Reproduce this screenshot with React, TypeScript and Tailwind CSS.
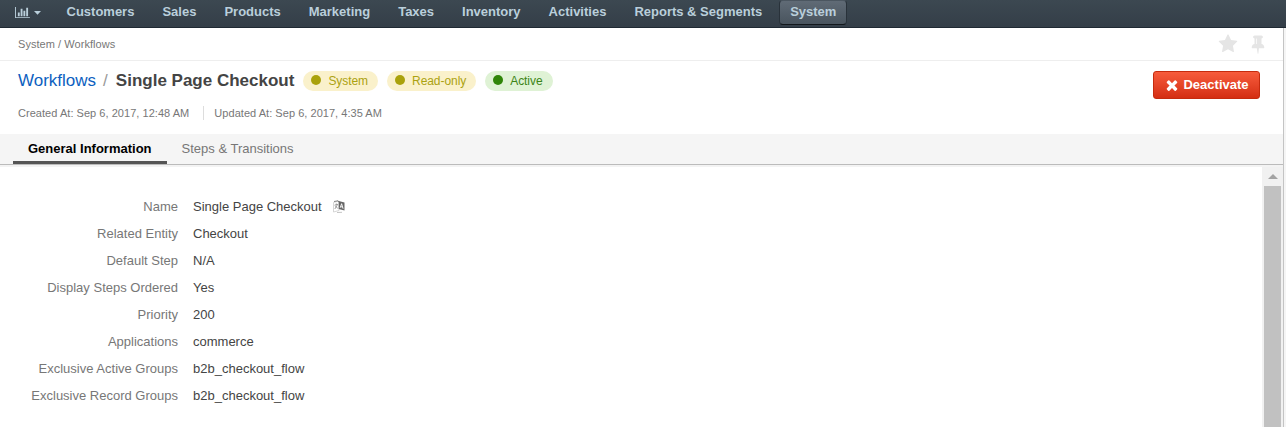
import React from "react";

const NAV = ["Customers", "Sales", "Products", "Marketing", "Taxes", "Inventory", "Activities", "Reports & Segments"];

const FIELDS: [string, string][] = [
  ["Name", "Single Page Checkout"],
  ["Related Entity", "Checkout"],
  ["Default Step", "N/A"],
  ["Display Steps Ordered", "Yes"],
  ["Priority", "200"],
  ["Applications", "commerce"],
  ["Exclusive Active Groups", "b2b_checkout_flow"],
  ["Exclusive Record Groups", "b2b_checkout_flow"],
];

function Badge({ label, tone }: { label: string; tone: "warn" | "ok" }) {
  const color = tone === "ok" ? "bg-[#dff2d5] text-[#3c8517]" : "bg-[#faf1cb] text-[#aca211]";
  const dot = tone === "ok" ? "bg-[#2f8508]" : "bg-[#aaa20b]";
  return (
    <span className={`flex h-5 items-center rounded-full pl-2 pr-[10px] text-[12px] leading-5 tracking-[-0.06px] ${color}`}>
      <span className={`mr-[7px] mb-[2px] size-[10px] rounded-full ${dot}`} />
      {label}
    </span>
  );
}

function TranslateIcon() {
  return (
    <svg className="ml-[11px] h-[13px] w-3" viewBox="0 0 12 13" fill="none">
      <path d="M.5 2.500 6 1v9.500L.5 12z" fill="#fff" stroke="#ccc" strokeWidth=".8" />
      <path d="M1.500 5.200 5 4.300M3.300 3.500v1.300M4.500 4.600 1.800 9M2.200 6 4.800 8.300" stroke="#888" strokeWidth=".8" />
      <path d="M1 1.500 5 .8 6 2.200" stroke="#777" strokeWidth=".9" />
      <path d="M5.700 1 11.500 2.500V10.500L5.700 9z" fill="#666" />
      <path d="M7.200 7.800 8.600 3.700l1.500 5M7.600 6.600l2 .5" stroke="#fff" strokeWidth=".9" />
      <path d="m4 12.500 5-.2" stroke="#aaa" strokeWidth=".7" />
    </svg>
  );
}

export default function App() {
  return (
    <div className="flex h-[427px] flex-col overflow-hidden bg-white font-['Liberation_Sans',Arial,sans-serif] text-[13px] text-[#444]">
      <nav className="flex h-7 shrink-0 items-start border-b border-[#1f2933] bg-linear-to-b from-[#3c4851] to-[#343e48] font-bold text-[#bacfdb]">
        <div className="flex h-6 w-[55.5px] items-center pl-[15px]">
          <svg className="h-[13px] w-[15px]" viewBox="0 0 2048 1792" fill="currentColor">
            <path d="M640 896v512H384V896h256zm384-512v1024H768V384h256zm1024 1152v128H0V128h128v1408h1920zm-640-896v768h-256V640h256zm384-384v1152h-256V256h256z" />
          </svg>
          <svg className="ml-1 mt-px h-1 w-[7px]" viewBox="0 0 7 4" fill="currentColor">
            <path d="M0 0h7L3.500 3.700z" />
          </svg>
        </div>
        {NAV.map((n) => (
          <a key={n} className="mr-[6px] px-[11px] leading-6">{n}</a>
        ))}
        <a className="h-[25px] w-[68px] rounded-[4px] border border-[#29323a] border-t-[#4b5660] border-b-[#12171b] bg-linear-to-b from-[#606b76] to-[#49545e] text-center leading-[22px]">System</a>
      </nav>

      <div className="flex min-h-0 flex-1">
        <main className="flex w-[1283px] shrink-0 flex-col">
          <div className="flex h-[33px] shrink-0 items-center justify-between border-b border-[#eee] pl-[18px] pr-[18px] text-[11px] text-[#777]">
            <span className="tracking-[0.05px]">System / Workflows</span>
            <span className="flex items-center gap-[13px] text-[#e5e5e5]">
              <svg className="size-5" viewBox="0 0 1792 1792" fill="currentColor">
                <path d="M1728 647q0 22-26 48l-363 354 86 500q1 7 1 20 0 21-10.500 35.500t-30.500 14.500q-19 0-40-12l-449-236-449 236q-22 12-40 12-21 0-31.500-14.500t-10.500-35.500q0-6 2-20l86-500-364-354q-25-27-25-48 0-37 56-46l502-73 225-455q19-41 49-41t49 41l225 455 502 73q56 9 56 46z" />
              </svg>
              <svg className="h-5 w-[14px]" viewBox="256 0 1280 1792" fill="currentColor">
                <path d="M800 864v-448q0-14-9-23t-23-9-23 9-9 23v448q0 14 9 23t23 9 23-9 9-23zm672 352q0 26-19 45t-45 19h-429l-51 483q-2 12-10.500 20.500t-20.500 8.500h-1q-27 0-32-27l-76-485h-404q-26 0-45-19t-19-45q0-123 78.500-221.500t177.500-98.500v-512q-52 0-90-38t-38-90 38-90 90-38h640q52 0 90 38t38 90-38 90-90 38v512q99 0 177.500 98.500t78.500 221.500z" />
              </svg>
            </span>
          </div>

          <header className="flex h-[73px] shrink-0 items-start justify-between pl-[18px] pr-[23px] pt-[10px]">
            <div>
              <div className="flex h-5 items-center">
                <h1 className="flex text-[17px] leading-5">
                  <a className="text-[#0d5fc0]">Workflows</a>
                  <span className="ml-[7px] mr-2 text-[#999]">/</span>
                  <span className="font-bold">Single Page Checkout</span>
                </h1>
                <div className="ml-[9px] flex gap-[9px]">
                  <Badge label="System" tone="warn" />
                  <Badge label="Read-only" tone="warn" />
                  <Badge label="Active" tone="ok" />
                </div>
              </div>
              <div className="mt-[15px] flex h-[14px] text-[11px] leading-[14px] tracking-[0.04px] text-[#777]">
                <span className="border-r border-[#ddd] pr-[14px]">Created At: Sep 6, 2017, 12:48 AM</span>
                <span className="pl-[10px]">Updated At: Sep 6, 2017, 4:35 AM</span>
              </div>
            </div>
            <button className="flex h-7 w-[107px] items-center justify-center rounded-[3px] border border-[#c52b0e] bg-linear-to-b from-[#f75b3b] to-[#d42d11] font-bold text-white">
              <svg className="mr-[3px] size-4" viewBox="0 0 1792 1792" fill="currentColor">
                <path d="M1490 1322q0 40-28 68l-136 136q-28 28-68 28t-68-28l-294-294-294 294q-28 28-68 28t-68-28l-136-136q-28-28-28-68t28-68l294-294-294-294q-28-28-28-68t28-68l136-136q28-28 68-28t68 28l294 294 294-294q28-28 68-28t68 28l136 136q28 28 28 68t-28 68l-294 294 294 294q28 28 28 68z" />
              </svg>
              Deactivate
            </button>
          </header>

          <div className="flex h-[31px] shrink-0 border-b border-[#bbb] bg-[#f5f5f5] pl-[13px] leading-[29px]">
            <a className="border-b-[3px] border-[#555] px-[15px] font-bold text-black">General Information</a>
            <a className="px-[15px] text-[#777]">Steps &amp; Transitions</a>
          </div>

          <div className="flex min-h-0 flex-1 border-t-2 border-[#f3f3f3]">
            <dl className="flex-1 pt-[26px]">
              {FIELDS.map(([k, v]) => (
                <div key={k} className="flex h-[27px] items-center">
                  <dt className="w-[178px] text-right text-[#777]">{k}</dt>
                  <dd className="ml-[15px] flex items-center">
                    {v}
                    {k === "Name" && <TranslateIcon />}
                  </dd>
                </div>
              ))}
            </dl>
            <div className="flex w-[21px] flex-col items-center bg-[#f1f1f1] pt-[7px]">
              <span className="mb-[7px] border-x-[5px] border-b-[5px] border-x-transparent border-b-[#a3a3a3]" />
              <div className="w-[17px] flex-1 bg-[#c1c1c1]" />
            </div>
          </div>
        </main>
        <div className="flex-1 border-l border-[#c4c4c4] bg-[#f5f5f5]" />
      </div>
    </div>
  );
}
